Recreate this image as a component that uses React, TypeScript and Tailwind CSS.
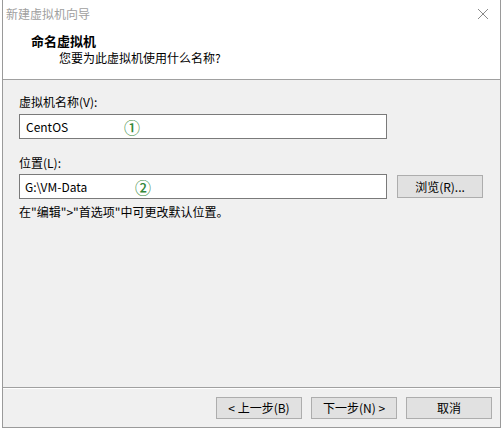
import React from 'react';

const font = { fontFamily: '"Noto Sans CJK SC", "Liberation Sans", sans-serif' };

export default function App() {
  return (
    <div className="w-[503px] h-[430px] bg-white text-[12px] text-black" style={font}>
      <div className="mx-[2px] h-[428px] border-x border-b border-[#9a9a9a] flex flex-col">
        {/* title bar */}
        <div className="h-[27px] flex items-center justify-between bg-white pl-[3px] pr-[10px]">
          <span className="text-[#a0a0a0] leading-none">新建虚拟机向导</span>
          <svg width="12" height="12" viewBox="0 0 12 12" className="mr-[1px]">
            <path d="M1 1 L11 11 M11 1 L1 11" stroke="#8a8a8a" strokeWidth="1" />
          </svg>
        </div>
        {/* header */}
        <div className="h-[53px] bg-white border-b border-[#a0a0a0] pl-[28px] pt-[6px]">
          <div className="font-bold text-[13px] leading-[16px]">命名虚拟机</div>
          <div className="pl-[28px] leading-[16px] mt-[1px]">您要为此虚拟机使用什么名称?</div>
        </div>
        {/* body */}
        <div className="flex-1 bg-[#f0f0f0] flex flex-col">
          <div className="flex-1 pl-[16px] pt-[14px]">
            <div className="leading-[16px]">虚拟机名称(V):</div>
            <div className="mt-[4px] w-[368px] h-[25px] bg-white border border-[#7a7a7a] flex items-center pl-[6px]">
              <span className="w-[98px]">CentOS</span>
              <span className="text-[#34883a] text-[16px] leading-none font-medium">①</span>
            </div>
            <div className="mt-[16px] leading-[16px]">位置(L):</div>
            <div className="mt-[3px] flex items-center gap-[10px]">
              <div className="w-[368px] h-[25px] bg-white border border-[#7a7a7a] flex items-center pl-[5px]">
                <span className="w-[110px]">G:\VM-Data</span>
                <span className="text-[#34883a] text-[16px] leading-none font-medium">②</span>
              </div>
              <button className="w-[86px] h-[23px] bg-[#e1e1e1] border border-[#adadad] leading-none">
                浏览(R)...
              </button>
            </div>
            <div className="mt-[5px] leading-[16px]">在"编辑"&gt;"首选项"中可更改默认位置。</div>
          </div>
          <div className="h-[40px] border-t border-[#a0a0a0] shadow-[inset_0_1px_0_#ffffff] flex justify-end items-start pt-[9px] pr-[8px] gap-[9px]">
            <button className="w-[86px] h-[22px] bg-[#e1e1e1] border border-[#adadad] leading-none">&lt; 上一步(B)</button>
            <button className="w-[86px] h-[22px] bg-[#e1e1e1] border border-[#adadad] leading-none">下一步(N) &gt;</button>
            <button className="w-[86px] h-[22px] bg-[#e1e1e1] border border-[#adadad] leading-none">取消</button>
          </div>
        </div>
      </div>
    </div>
  );
}
